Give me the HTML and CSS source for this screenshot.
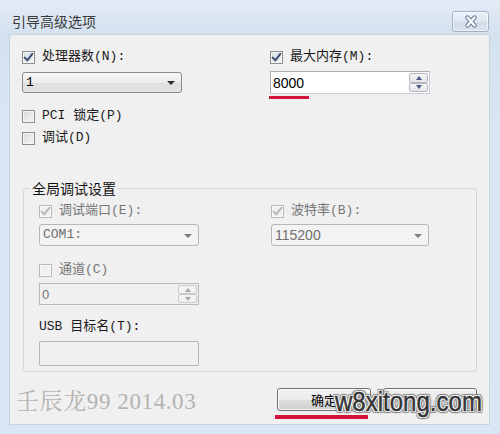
FILE: index.html
```html
<!DOCTYPE html>
<html lang="zh-CN">
<head>
<meta charset="utf-8">
<title>引导高级选项</title>
<link rel="stylesheet" href="styles.css">
</head>
<body>
<div class="window">
  <div class="titlebar">
    <span class="title">引导高级选项</span>
    <button class="close" aria-label="关闭">
      <svg width="16" height="13" viewBox="0 0 16 13">
        <path d="M4.5 2.5 L11.5 10.5 M11.5 2.5 L4.5 10.5" stroke="#74849a" stroke-width="4.4" stroke-linecap="round" fill="none"/>
        <path d="M4.5 2.5 L11.5 10.5 M11.5 2.5 L4.5 10.5" stroke="#ffffff" stroke-width="2.2" stroke-linecap="round" fill="none"/>
      </svg>
    </button>
  </div>
  <div class="client">
    <div class="top">
      <div class="col">
        <label class="chk"><span class="box"><svg width="11" height="11" viewBox="0 0 11 11"><path d="M1.8 5.6 L4.3 8.4 L9.3 1.8" class="tick"/></svg></span>处理器数(N):</label>
        <div class="select sel-top"><span>1</span><i class="arrow"></i></div>
        <label class="chk gap-lg"><span class="box"></span>PCI 锁定(P)</label>
        <label class="chk gap-sm"><span class="box"></span>调试(D)</label>
      </div>
      <div class="col">
        <label class="chk"><span class="box"><svg width="11" height="11" viewBox="0 0 11 11"><path d="M1.8 5.6 L4.3 8.4 L9.3 1.8" class="tick"/></svg></span>最大内存(M):</label>
        <div class="spin spin-top"><span class="val">8000</span><span class="btns"><span class="up"></span><span class="dn"></span></span></div>
        <div class="mark mark-short"></div>
      </div>
    </div>
    <fieldset class="group">
      <legend>全局调试设置</legend>
      <div class="gcols">
        <div class="col">
          <label class="chk off"><span class="box"><svg width="11" height="11" viewBox="0 0 11 11"><path d="M1.8 5.6 L4.3 8.4 L9.3 1.8" class="tick"/></svg></span>调试端口(E):</label>
          <div class="select off g-sel"><span>COM1:</span><i class="arrow"></i></div>
          <label class="chk off g-chk2"><span class="box"></span>通道(C)</label>
          <div class="spin off g-spin"><span class="val">0</span><span class="btns"><span class="up"></span><span class="dn"></span></span></div>
          <div class="lbl">USB 目标名(T):</div>
          <div class="textbox"></div>
        </div>
        <div class="col">
          <label class="chk off"><span class="box"><svg width="11" height="11" viewBox="0 0 11 11"><path d="M1.8 5.6 L4.3 8.4 L9.3 1.8" class="tick"/></svg></span>波特率(B):</label>
          <div class="select off g-sel"><span class="num">115200</span><i class="arrow"></i></div>
        </div>
      </div>
    </fieldset>
    <div class="footer">
      <span class="sign">壬辰龙99 2014.03</span>
      <div class="buttons">
        <div class="okwrap">
          <button class="btn">确定</button>
          <div class="mark mark-long"></div>
        </div>
        <button class="btn btn-cancel">取消</button>
      </div>
    </div>
  </div>
  <div class="brand">w8xitong.com</div>
</div>
</body>
</html>
```
FILE: styles.css
```css
* { box-sizing: border-box; }
html, body { margin: 0; padding: 0; }
body {
  width: 500px;
  height: 434px;
  overflow: hidden;
  background: #d9e5f2;
  font-family: "Liberation Mono", "Noto Sans CJK SC", monospace;
  font-size: 13px;
  color: #1b1b1b;
}
.window {
  position: relative;
  width: 500px;
  height: 434px;
  background: linear-gradient(#e4ecf6, #d4e1ef 34px, #d9e5f2 120px, #dae6f3);
  display: flex;
  flex-direction: column;
}
.titlebar {
  height: 34px;
  padding: 8px 11px 0 12px;
  display: flex;
  align-items: center;
  justify-content: space-between;
  flex: none;
}
.title {
  font-family: "Noto Sans CJK SC", sans-serif;
  font-size: 14px;
  line-height: 18px;
  color: #3a3a3a;
}
.close {
  width: 37px;
  height: 21px;
  padding: 0;
  border: 1px solid #a2b2c6;
  border-radius: 3px;
  background: linear-gradient(#edf2f8, #dde6f0 50%, #d2dde9 51%, #d9e3ee);
  box-shadow: inset 0 0 0 1px rgba(255,255,255,0.55);
  display: flex;
  align-items: center;
  justify-content: center;
}
.client {
  margin-left: 9px;
  width: 481px;
  height: 391px;
  background: #f0f0f0;
  border: 1px solid #c6d3e0;
  padding-top: 14px;
  flex: none;
}
.top {
  display: grid;
  grid-template-columns: 160px 160px;
  column-gap: 88px;
  padding-left: 12px;
  align-items: start;
}
.col { display: flex; flex-direction: column; }
.chk {
  display: flex;
  align-items: center;
  gap: 7px;
  height: 16px;
  line-height: 16px;
  white-space: nowrap;
  color: #1b1b1b;
}
.box {
  flex: none;
  width: 13px;
  height: 13px;
  border: 1px solid #8e8f8f;
  background: linear-gradient(135deg, #d9dadb, #f6f6f6);
  box-shadow: inset 0 0 0 1px #f4f4f4;
  display: flex;
  align-items: center;
  justify-content: center;
}
.tick { fill: none; stroke: #3d5274; stroke-width: 2.1; stroke-linecap: round; stroke-linejoin: round; }
.gap-lg { margin-top: 15px; }
.gap-sm { margin-top: 6px; }

.select {
  height: 21px;
  border: 1px solid #8b8b8b;
  border-radius: 3px;
  background: linear-gradient(#f7f7f7, #ececec 50%, #dfdfdf 51%, #e3e3e3);
  display: flex;
  align-items: center;
  justify-content: space-between;
  padding: 0 6px 0 3px;
  line-height: 16px;
  color: #000;
}
.sel-top { margin-top: 7px; }
.arrow {
  width: 0;
  height: 0;
  border-left: 4px solid transparent;
  border-right: 4px solid transparent;
  border-top: 4px solid #2d2d2d;
  margin-top: 1px;
}
.select.off {
  height: 22px;
  border-color: #b7b7b7;
  background: #f3f3f3;
  color: #6f6f6f;
}
.select.off .arrow { border-top-color: #7c7c7c; }
.num { font-family: "Liberation Sans", "Noto Sans CJK SC", sans-serif; font-size: 14px; }

.spin {
  height: 23px;
  border: 1px solid #abadb3;
  border-bottom-color: #c9ced6;
  border-right-color: #c9ced6;
  background: #fff;
  display: flex;
}
.spin-top { margin-top: 6px; }
.val {
  flex: 1;
  padding-left: 2px;
  display: flex;
  align-items: center;
  font-family: "Liberation Sans", sans-serif;
  font-size: 14px;
  color: #000;
}
.btns {
  width: 19px;
  margin: 1px 1px 1px 0;
  display: flex;
  flex-direction: column;
}
.btns span {
  flex: 1;
  border: 1px solid #b4b8be;
  border-radius: 2px;
  background: linear-gradient(#f6f6f6, #e4e5e7);
  display: flex;
  align-items: center;
  justify-content: center;
}
.btns .up::after, .btns .dn::after {
  content: "";
  width: 0;
  height: 0;
  border-left: 3.5px solid transparent;
  border-right: 3.5px solid transparent;
}
.btns .up::after { border-bottom: 4px solid #4a5d80; }
.btns .dn::after { border-top: 4px solid #4a5d80; }

.spin.off {
  height: 22px;
  border-color: #bababa;
  background: #f0f0f0;
}
.spin.off .val { color: #777; font-size: 13px; }
.spin.off .btns span { border-color: #cacaca; background: #f3f3f3; }
.spin.off .btns .up::after { border-bottom-color: #a9a9a9; }
.spin.off .btns .dn::after { border-top-color: #a9a9a9; }

.mark { background: #d3163c; }
.mark-short { width: 40px; height: 3px; margin: 2px 0 0 -1px; }
.mark-long { width: 93px; height: 4px; margin: 4px 0 0 -2px; }

.group {
  margin: 34px 0 0 13px;
  width: 454px;
  min-width: 0;
  padding: 7px 0 5px 0;
  border: 1px solid #cfd8df;
  border-radius: 3px;
}
.group legend {
  margin-left: 6px;
  padding: 0 2px;
  font-family: "Noto Sans CJK SC", sans-serif;
  font-size: 14px;
  line-height: 16px;
  color: #111;
}
.gcols {
  display: grid;
  grid-template-columns: 160px 158px;
  column-gap: 72px;
  padding-left: 15px;
  align-items: start;
}
.chk.off { color: #767676; }
.chk.off .box {
  border-color: #b9b9b9;
  background: #f1f1f1;
  box-shadow: inset 0 0 0 1px #f8f8f8;
}
.chk.off .tick { stroke: #b9b9b9; }
.g-sel { margin-top: 5px; }
.g-chk2 { margin-top: 16px; }
.g-spin { margin-top: 5px; }
.lbl {
  margin-top: 14px;
  height: 16px;
  line-height: 16px;
  white-space: nowrap;
  color: #1b1b1b;
}
.textbox {
  margin-top: 6px;
  height: 25px;
  border: 1px solid #b7b7b7;
  border-radius: 2px;
  background: #f0f0f0;
}

.footer {
  margin-top: 16px;
  padding: 0 12px 0 6px;
  display: flex;
  align-items: flex-start;
  justify-content: space-between;
}
.sign {
  font-family: "Liberation Serif", "Noto Serif CJK SC", "Noto Sans CJK SC", serif;
  font-size: 23px;
  line-height: 28px;
  letter-spacing: 0.6px;
  color: #b4b4b4;
  white-space: nowrap;
}
.buttons { display: flex; gap: 12px; align-items: flex-start; }
.okwrap { display: flex; flex-direction: column; }
.btn {
  width: 94px;
  height: 23px;
  padding: 0;
  border: 1px solid #707070;
  border-radius: 3px;
  background: linear-gradient(#f3f3f3, #ebebeb 50%, #dddddd 51%, #cfcfcf);
  box-shadow: inset 0 0 0 1px #fbfbfb;
  font-family: "Noto Sans CJK SC", sans-serif;
  font-size: 13px;
  line-height: 16px;
  color: #000;
}
.btn-cancel { color: #e8e8e8; }
.brand {
  position: absolute;
  left: 335px;
  top: 389px;
  font-family: "Liberation Sans", sans-serif;
  font-size: 27px;
  line-height: 27px;
  color: #353535;
  -webkit-text-stroke: 0.5px #353535;
  transform: scaleX(0.89);
  transform-origin: left top;
  white-space: nowrap;
  text-shadow:
    1px 0 0 #fff, -1px 0 0 #fff, 0 1px 0 #fff, 0 -1px 0 #fff,
    1px 1px 0 #fff, -1px -1px 0 #fff, 1px -1px 0 #fff, -1px 1px 0 #fff,
    2px 0 1px #8c8c8c, -2px 0 1px #8c8c8c, 0 2px 1px #8c8c8c, 0 -2px 1px #8c8c8c,
    2px 2px 1px #8c8c8c, -2px -2px 1px #8c8c8c, 2px -2px 1px #8c8c8c, -2px 2px 1px #8c8c8c;
}
```
